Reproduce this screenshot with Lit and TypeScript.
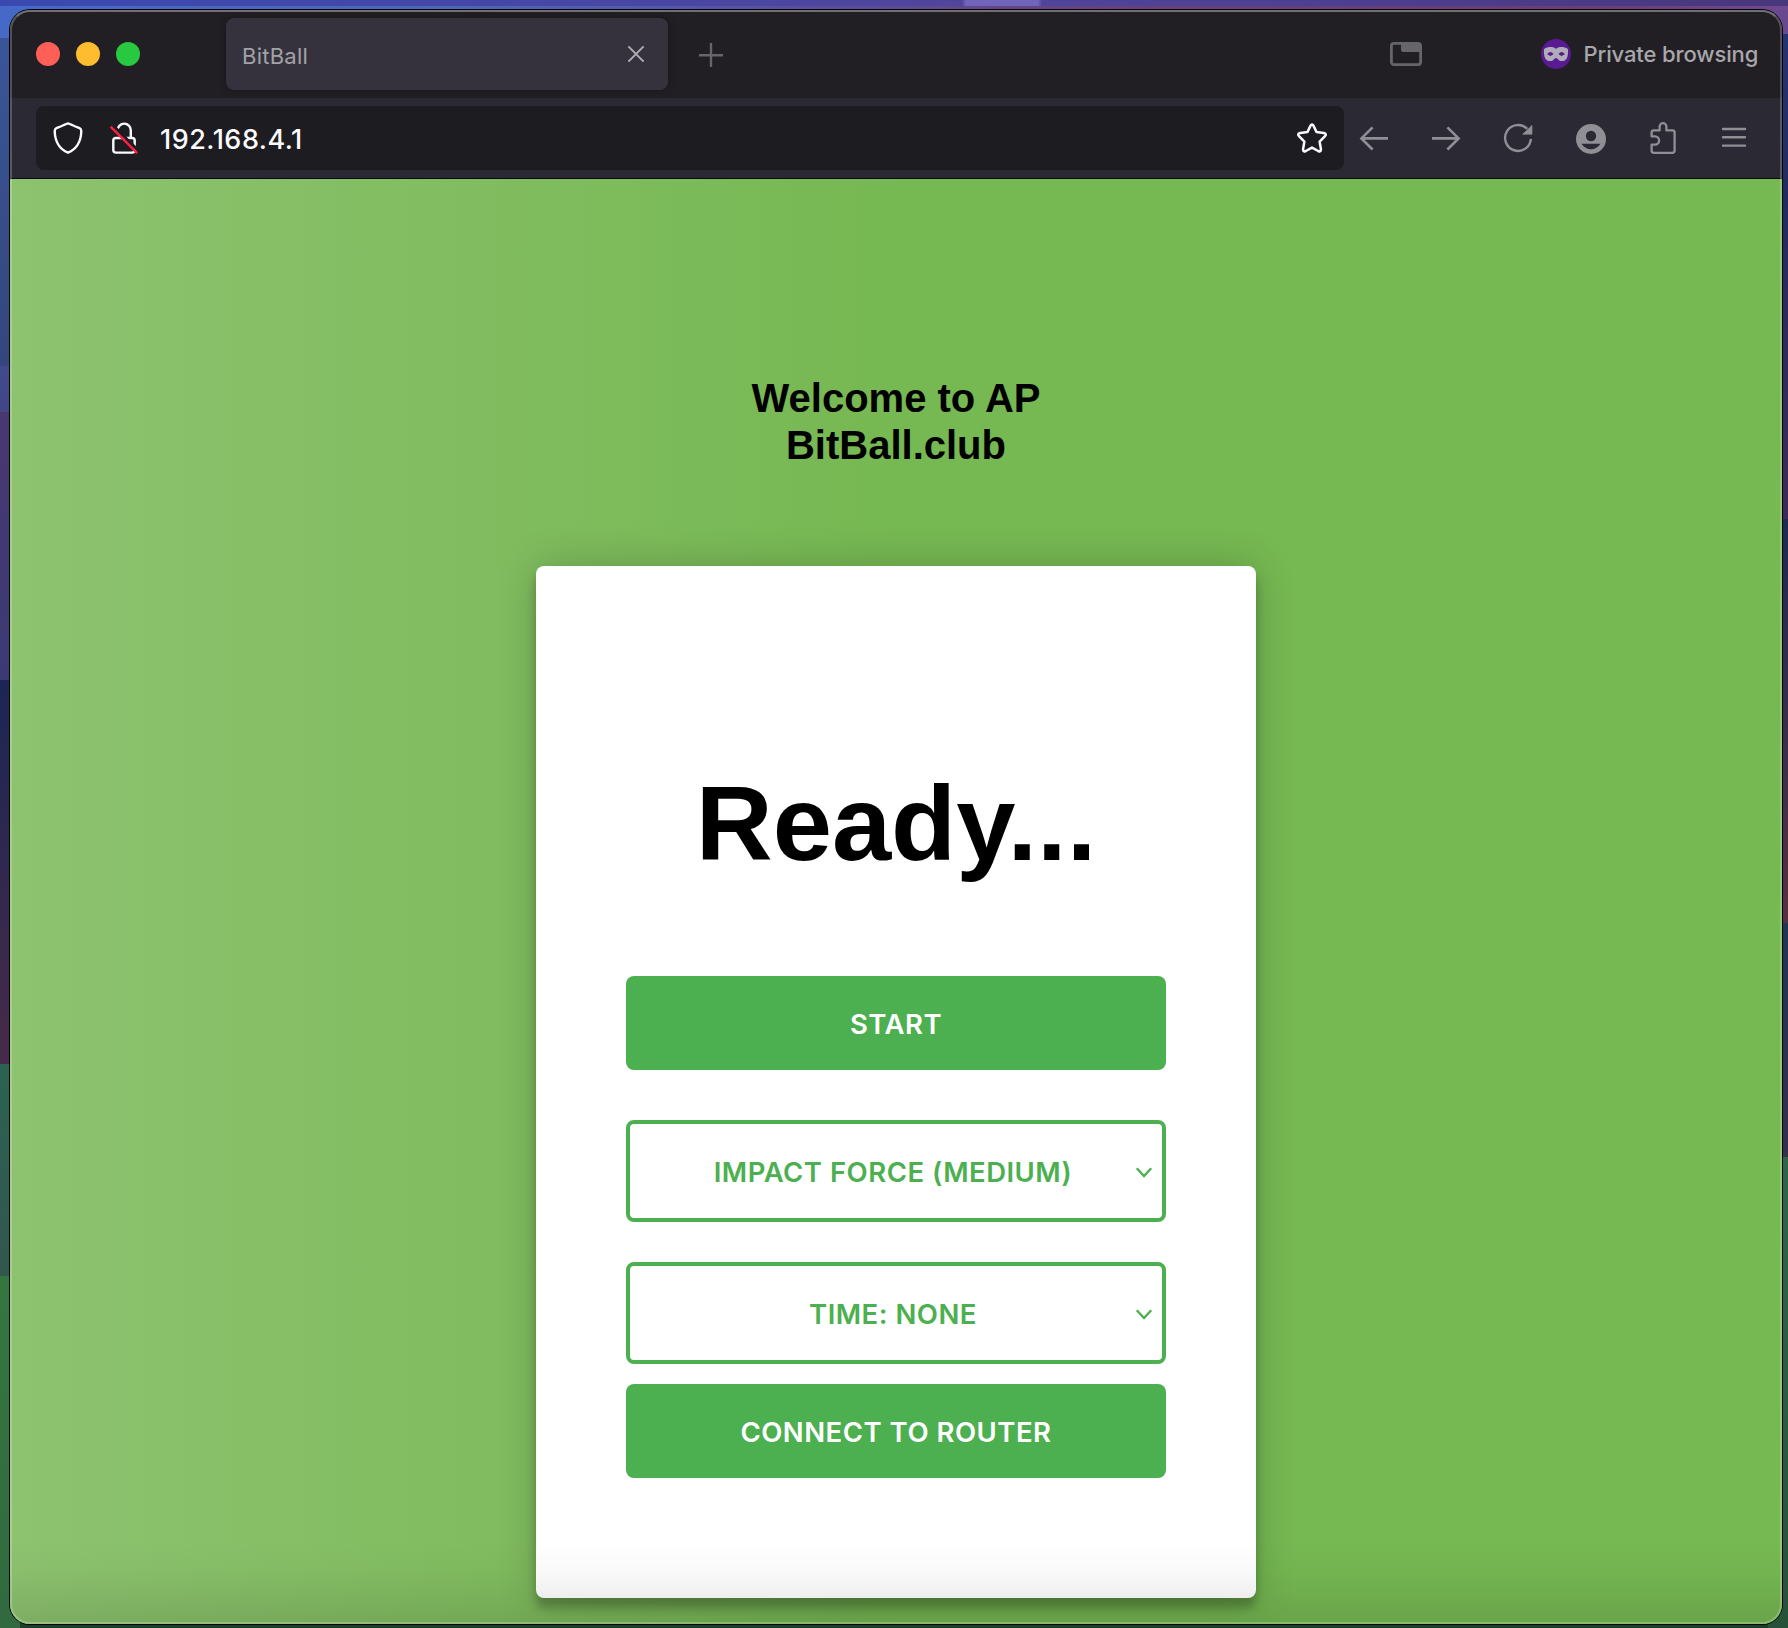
import { LitElement, html, css, svg } from "lit";
import { customElement, property } from "lit/decorators.js";

const icons = {
  shield: svg`<path d="M16 1.3 Q16.8 1.5 27.6 6.2 Q29.4 7 29.3 9.4 C29 19 24.6 27.4 16 30.7 C7.4 27.4 3 19 2.7 9.4 Q2.6 7 4.4 6.2 Q15.2 1.5 16 1.3 Z" fill="none" stroke="#fbfbfe" stroke-width="2.4" stroke-linejoin="round"/>`,
  lock: svg`<path d="M9.6 9 V8.2 A6.6 6.6 0 0 1 22.8 8.2 V16" fill="none" stroke="#fbfbfe" stroke-width="2.4"/>
    <rect x="5.3" y="16" width="21.4" height="14.6" rx="2.6" fill="none" stroke="#fbfbfe" stroke-width="2.4"/>
    <path d="M4.4 2.8 L31 29.4" stroke="#1d1c21" stroke-width="3"/>
    <path d="M2.6 4.6 L29.2 31.2" stroke="#ff1f40" stroke-width="2.4"/>`,
  star: svg`<path d="M14.4 3.9 Q16 .9 17.6 3.9 L20.5 10 L27.8 11.1 Q31.3 11.8 28.8 14.4 L23.6 19.6 L24.9 26.8 Q25.2 30.4 22.2 29 L16 25.6 L9.8 29 Q6.8 30.4 7.1 26.8 L8.4 19.6 L3.2 14.4 Q.7 11.8 4.2 11.1 L11.5 10 Z" fill="none" stroke="#fbfbfe" stroke-width="2.5" stroke-linejoin="round"/>`,
  back: svg`<path d="M30 16.4 H3.4 M14.6 5.3 L3.4 16.4 L14.6 27.5" fill="none" stroke="#908f96" stroke-width="2.6"/>`,
  forward: svg`<path d="M2 16.4 H28.6 M17.4 5.3 L28.6 16.4 L17.4 27.5" fill="none" stroke="#908f96" stroke-width="2.6"/>`,
  reload: svg`<path d="M28.9 16.8 A12.9 12.9 0 1 1 25.2 6.9" fill="none" stroke="#908f96" stroke-width="2.4"/><path d="M30 3.4 V12.3 H20.6 Z" fill="#908f96" stroke="#908f96" stroke-width=".6" stroke-linejoin="round"/>`,
  account: svg`<circle cx="17" cy="17" r="15" fill="#908f96"/><circle cx="17" cy="14" r="5.2" fill="#2b2933"/><path d="M7.5 21.8 H26.5 C24 25.4 21 27.3 17 27.3 C13 27.3 10 25.4 7.5 21.8 Z" fill="#2b2933"/>`,
  puzzle: svg`<path d="M5.6 14.4 V10.6 Q5.6 8.4 7.8 8.4 H13.6 V4.8 A3.4 3.6 0 0 1 20.4 4.8 V8.4 H26.4 Q28.6 8.4 28.6 10.6 V28.6 Q28.6 30.8 26.4 30.8 H7.8 Q5.6 30.8 5.6 28.6 V22.6 H9 A4 4 0 0 0 9 14.4 Z" fill="none" stroke="#908f96" stroke-width="2.3" stroke-linejoin="round"/>`,
  menu: svg`<path d="M5 7 H27 M5 15.3 H27 M5 23.6 H27" stroke="#908f96" stroke-width="2.4" stroke-linecap="round"/>`,
  close: svg`<path d="M8.4 8.4 L23.6 23.6 M23.6 8.4 L8.4 23.6" stroke="#aeadb2" stroke-width="2"/>`,
  plus: svg`<path d="M4 17.2 H28 M16 5 V29" stroke="#66656a" stroke-width="2.4"/>`,
  window: svg`<rect x="1.4" y="5.4" width="29.2" height="21.2" rx="2.6" fill="none" stroke="#66656a" stroke-width="2.8"/><path d="M11 5 H30 V14 H13 Q11 14 11 12 Z" fill="#66656a"/>`,
  mask: svg`<circle cx="16" cy="16" r="15" fill="#591a92"/><path fill-rule="evenodd" d="M4 11.6 Q4 10.6 5.4 10.2 C7.4 9.2 12.6 8.2 14.6 10 Q16 11 17.4 10 C19.4 8.2 24.6 9.2 26.6 10.2 Q28 10.6 28 11.6 C28.2 14.6 28 18.6 26.6 20.8 C25 23.4 21.2 23.6 19.2 22.4 C17.6 21.4 17.2 20 16 20 C14.8 20 14.4 21.4 12.8 22.4 C10.8 23.6 7 23.4 5.4 20.8 C4 18.6 3.8 14.6 4 11.6 Z M7.2 16.1 Q10.4 19.7 13.6 16.1 Q10.4 12.1 7.2 16.1 Z M18.4 16.1 Q21.6 19.7 24.8 16.1 Q21.6 12.1 18.4 16.1 Z" fill="#b1adb8"/>`,
  chevron: svg`<path d="M8.8 12.2 L16 20 L23.2 12.2" fill="none" stroke="#4caf50" stroke-width="2.4"/>`,
};

const toolbarActions = ["back", "forward", "reload", "account", "puzzle", "menu"];

@customElement("ui-icon")
class UiIcon extends LitElement {
  @property() name: keyof typeof icons = "menu";
  static styles = css`
    :host { display: block; width: 32px; height: 32px; flex: none; }
    svg { display: block; overflow: visible; }
  `;
  render() {
    return html`<svg width="32" height="32" viewBox="0 0 32 32">${icons[this.name]}</svg>`;
  }
}

@customElement("browser-chrome")
class BrowserChrome extends LitElement {
  static styles = css`
    :host { display: block; font-family: Inter, "Liberation Sans", sans-serif; }
    .tabs { display: flex; align-items: center; height: 88px; box-sizing: border-box; padding: 0 24px 0 26px; background: #211f24; }
    .lights { display: flex; gap: 16px; }
    .light { width: 24px; height: 24px; border-radius: 50%; }
    .red { background: #ff5f57; }
    .yellow { background: #febc2e; }
    .green { background: #28c840; }
    .tab { display: flex; align-items: center; justify-content: space-between; margin-left: 86px; width: 442px; height: 72px; box-sizing: border-box; padding: 0 16px; border-radius: 8px; background: #35323d; box-shadow: 0 0 8px rgba(0, 0, 0, .3); }
    .title { color: #a3a2a8; font-size: 22px; line-height: 32px; padding-top: 3px; letter-spacing: .25px; }
    .new { margin-left: 27px; }
    .spacer { flex: 1; }
    .private { display: flex; align-items: center; gap: 11.5px; margin-left: 118px; width: 218px; color: #a8a7ab; font-size: 22px; font-weight: 500; line-height: 32px; letter-spacing: -.12px; white-space: nowrap; }
    .bar { display: flex; align-items: center; height: 81px; box-sizing: border-box; padding: 8px 32px 9px 26px; background: #2b2933; border-bottom: 1px solid #09080c; }
    .url { display: flex; align-items: center; flex: 1; height: 64px; box-sizing: border-box; padding: 0 16px; border-radius: 8px; background: #1d1c21; }
    .lock { margin-left: 24px; }
    .address { flex: 1; margin-left: 20px; padding-top: 4px; color: #fbfbfe; font-size: 27px; font-weight: 500; line-height: 34px; letter-spacing: .5px; }
    .actions { display: flex; gap: 40px; padding-left: 14px; }
  `;
  render() {
    return html`
      <div class="tabs">
        <div class="lights"><span class="light red"></span><span class="light yellow"></span><span class="light green"></span></div>
        <div class="tab"><span class="title">BitBall</span><ui-icon name="close"></ui-icon></div>
        <ui-icon class="new" name="plus"></ui-icon>
        <div class="spacer"></div>
        <ui-icon name="window"></ui-icon>
        <div class="private"><ui-icon name="mask"></ui-icon><span>Private browsing</span></div>
      </div>
      <div class="bar">
        <div class="url">
          <ui-icon name="shield"></ui-icon>
          <ui-icon class="lock" name="lock"></ui-icon>
          <span class="address">192.168.4.1</span>
          <ui-icon name="star"></ui-icon>
        </div>
        <div class="actions">
          ${toolbarActions.map((n) => html`<ui-icon name=${n}></ui-icon>`)}
        </div>
      </div>
    `;
  }
}

@customElement("app-root")
class AppRoot extends LitElement {
  static styles = css`
    :host { display: block; }
    .desktop {
      width: 1788px; height: 1628px; box-sizing: border-box; padding: 10px 6px 4px 10px; overflow: hidden;
      background:
        linear-gradient(90deg, transparent 962px, #7065bb 966px, #7065bb 1038px, transparent 1042px) 0 0 / 100% 6px no-repeat,
        linear-gradient(90deg, #3a49b0, #4647a6 30%, #50459a 55%, #4c3f92 75%, #49377c) 0 0 / 100% 6px no-repeat,
        linear-gradient(90deg, #4669c8, #4c66b8 25%, #5a4f9e 45%, #6b3f78 65%, #6d3d76 90%, #6e4a92) 0 6px / 100% 4px no-repeat,
        linear-gradient(#4669c8, #4669c8) 0 10px / 30px 28px no-repeat,
        linear-gradient(#3a5597, #33477e) 0 38px / 10px 328px no-repeat,
        linear-gradient(#414b8e, #404688) 0 366px / 10px 46px no-repeat,
        linear-gradient(#48386f, #3c3a75) 0 412px / 10px 268px no-repeat,
        linear-gradient(#1b2654, #472a49) 0 680px / 10px 384px no-repeat,
        linear-gradient(#2b6352, #33564f) 0 1064px / 10px 212px no-repeat,
        linear-gradient(#33773f, #32693f) 0 1276px / 20px 352px no-repeat,
        linear-gradient(#6a4890, #6a4890) 1758px 6px / 30px 28px no-repeat,
        linear-gradient(#233474, #202c60 35%, #3f2b55) 1778px 34px / 10px 485px no-repeat,
        linear-gradient(#1b2c50, #55313f) 1778px 519px / 10px 404px no-repeat,
        linear-gradient(#1d3752, #343149) 1778px 923px / 10px 234px no-repeat,
        linear-gradient(#2d6748, #265239) 1768px 1157px / 20px 471px no-repeat,
        #1c3f29;
    }
    .frame { border-radius: 20px; box-shadow: 0 0 0 1px #050507; }
    .window { position: relative; display: flex; flex-direction: column; height: 1614px; border-radius: 20px; overflow: hidden; background: #76b852; }
    .window::after { content: ""; position: absolute; inset: 0; border: 2px solid rgba(255, 255, 255, .22); border-top-color: rgba(255, 255, 255, .36); border-radius: 20px; pointer-events: none; }
    .page { position: relative; flex: 1; display: flex; flex-direction: column; align-items: center; background: linear-gradient(90deg, #8dc26f 0%, #76b852 50%); font-family: "Liberation Sans", Arial, sans-serif; color: #000; }
    .shade { position: absolute; left: 0; right: 0; bottom: 0; height: 84px; background: linear-gradient(rgba(0, 0, 0, 0), rgba(0, 0, 0, .02) 35%, rgba(0, 0, 0, .065) 70%, rgba(0, 0, 0, .11)); }
    .welcome { margin: 196px 0 0; font-size: 40px; line-height: 47px; font-weight: 700; text-align: center; }
    .card { margin-top: 97px; width: 720px; height: 1032px; box-sizing: border-box; padding: 0 90px; display: flex; flex-direction: column; align-items: stretch; background: #fff; border-radius: 8px; box-shadow: 0 0 40px rgba(0, 0, 0, .2), 0 10px 10px rgba(0, 0, 0, .24); }
    .ready { margin: 196px 0 0; height: 124px; line-height: 124px; font-size: 106.5px; font-weight: 700; text-align: center; }
    .button, .select { font-family: Inter, "Liberation Sans", sans-serif; font-size: 27.5px; font-weight: 600; letter-spacing: .5px; display: flex; align-items: center; box-sizing: border-box; border-radius: 8px; white-space: nowrap; }
    .button { height: 94px; justify-content: center; background: #4caf50; color: #fff; padding-top: 1px; }
    .start { margin-top: 90px; }
    .select { height: 102px; border: 4px solid #4caf50; color: #4caf50; }
    .label { flex: 1; text-align: center; padding: 1px 0 0 28px; }
    .arrow { margin: 2px 2px 0 0; }
    .force { margin-top: 50px; }
    .time { margin-top: 40px; }
    .connect { margin-top: 20px; }
  `;
  render() {
    return html`
      <div class="desktop"><div class="frame">
        <div class="window">
          <browser-chrome></browser-chrome>
          <div class="page">
            <h2 class="welcome">Welcome to AP<br />BitBall.club</h2>
            <div class="card">
              <h1 class="ready">Ready...</h1>
              <div class="button start">START</div>
              <div class="select force"><span class="label">IMPACT FORCE (MEDIUM)</span><ui-icon class="arrow" name="chevron"></ui-icon></div>
              <div class="select time"><span class="label">TIME: NONE</span><ui-icon class="arrow" name="chevron"></ui-icon></div>
              <div class="button connect">CONNECT TO ROUTER</div>
            </div>
            <div class="shade"></div>
          </div>
        </div>
      </div></div>
    `;
  }
}
